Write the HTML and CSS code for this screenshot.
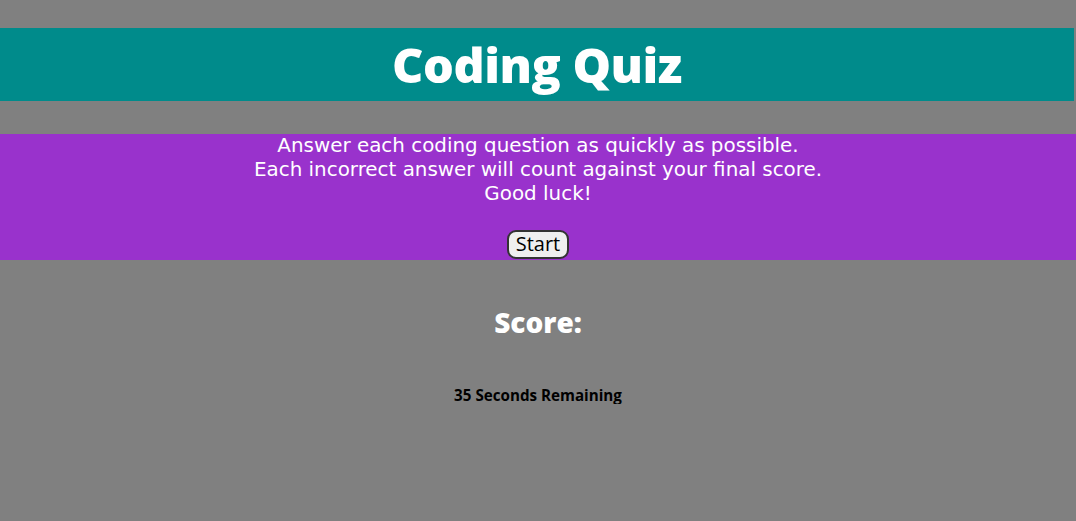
FILE: index.html
```html
<!DOCTYPE html>
<html>
<head>
<meta charset="utf-8">
<link rel="stylesheet" href="styles.css">
</head>
<body>
<header class="title-bar"><h1 class="title">Coding Quiz</h1></header>
<section class="intro">
  <p class="intro-text">Answer each coding question as quickly as possible.<br>Each incorrect answer will count against your final score.<br>Good luck!</p>
  <button class="start-btn">Start</button>
</section>
<h2 class="score">Score:</h2>
<p class="timer">35 Seconds Remaining</p>
</body>
</html>
```
FILE: styles.css
```css
html, body { margin: 0; padding: 0; }
body {
  background: #808080;
  font-family: "Open Sans", sans-serif;
  padding-top: 28px;
  text-align: center;
}
.title-bar {
  background: #008b8b;
  height: 73px;
  margin-right: 2px;
  display: flex;
  align-items: center;
  justify-content: center;
}
.title {
  margin: 0;
  color: #fff;
  font-family: "Open Sans", sans-serif;
  font-weight: 800;
  font-size: 48.5px;
  letter-spacing: -0.5px;
  line-height: 1;
}
.intro {
  background: #9932cc;
  margin-top: 33px;
  height: 126px;
  display: flex;
  flex-direction: column;
  align-items: center;
}
.intro-text {
  margin: 0;
  color: #fff;
  font-family: "DejaVu Sans", sans-serif;
  font-size: 19.9px;
  line-height: 24px;
}
.start-btn {
  margin-top: 24px;
  font-family: "Open Sans", sans-serif;
  font-size: 20px;
  line-height: 22px;
  padding: 1px 7px 2px;
  background: #efefef;
  color: #000;
  border: 2px solid #333;
  border-radius: 9px;
}
.score {
  margin: 44px 0 0;
  color: #fff;
  font-weight: 800;
  font-size: 28px;
  line-height: 36px;
}
.timer {
  margin: 46px 0 0;
  color: #000;
  font-weight: 700;
  font-size: 15.2px;
  line-height: 18px;
}
```
